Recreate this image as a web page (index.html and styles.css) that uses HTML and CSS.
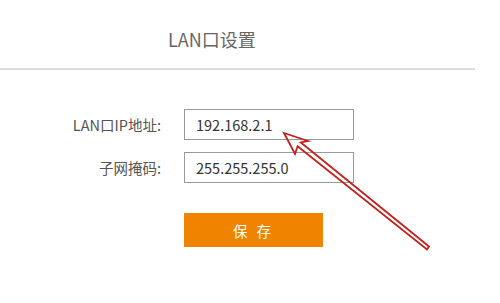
FILE: index.html
```html
<!DOCTYPE html>
<html lang="zh-CN">
<head>
    <meta charset="UTF-8">
    <title>LAN口设置</title>
    <link rel="stylesheet" href="styles.css">
</head>
<body>
    <div class="page">
        <div class="header">
            <div class="title">LAN口设置</div>
        </div>
        <form class="form">
            <div class="row">
                <label class="label" for="lanIp">LAN口IP地址:</label>
                <input class="field" type="text" id="lanIp" value="192.168.2.1">
            </div>
            <div class="row">
                <label class="label" for="mask">子网掩码:</label>
                <input class="field" type="text" id="mask" value="255.255.255.0">
            </div>
            <div class="row">
                <span class="label"></span>
                <button class="save" type="button">保 存</button>
            </div>
        </form>
        <svg class="arrow" width="500" height="303" viewBox="0 0 500 303">
            <polygon points="284,133 308,141 300.8,142.4 429,246.5 427,249.5 297.6,146.3 295,154"
                     fill="none" stroke="#c4201c" stroke-width="1.8" stroke-linejoin="miter"/>
        </svg>
    </div>
</body>
</html>
```

FILE: styles.css
```css
body, html {
    margin: 0;
    background-color: #fff;
    font-family: "Noto Sans CJK SC", "Noto Sans", sans-serif;
    color: #333;
}
.page {
    position: relative;
    width: 500px;
    height: 303px;
    overflow: hidden;
}
.header {
    width: 475px;
    height: 70px;
    border-bottom: 2px solid #ddd;
    box-sizing: border-box;
    padding: 27px 0 0 168px;
}
.title {
    font-size: 18px;
    color: #666;
    line-height: 24px;
}
.form {
    padding-top: 39px;
    display: flex;
    flex-direction: column;
    gap: 12px;
}
.row {
    display: flex;
    align-items: center;
}
.label {
    width: 162px;
    text-align: right;
    padding-right: 1px;
    box-sizing: border-box;
    font-size: 14.5px;
    color: #555;
    flex-shrink: 0;
}
.field {
    width: 170px;
    height: 31px;
    box-sizing: border-box;
    border: 1px solid #999;
    padding: 0 0 0 11px;
    font-family: inherit;
    font-size: 14.5px;
    color: #333;
    outline: none;
    margin-left: 22px;
}
.save {
    margin-left: 22px;
    margin-top: 18px;
    width: 139px;
    height: 34px;
    border: none;
    background-color: #f08300;
    color: #fff;
    font-family: inherit;
    font-size: 14.5px;
    letter-spacing: 3px;
    cursor: pointer;
}
.arrow {
    position: absolute;
    left: 0;
    top: 0;
    pointer-events: none;
}
```
